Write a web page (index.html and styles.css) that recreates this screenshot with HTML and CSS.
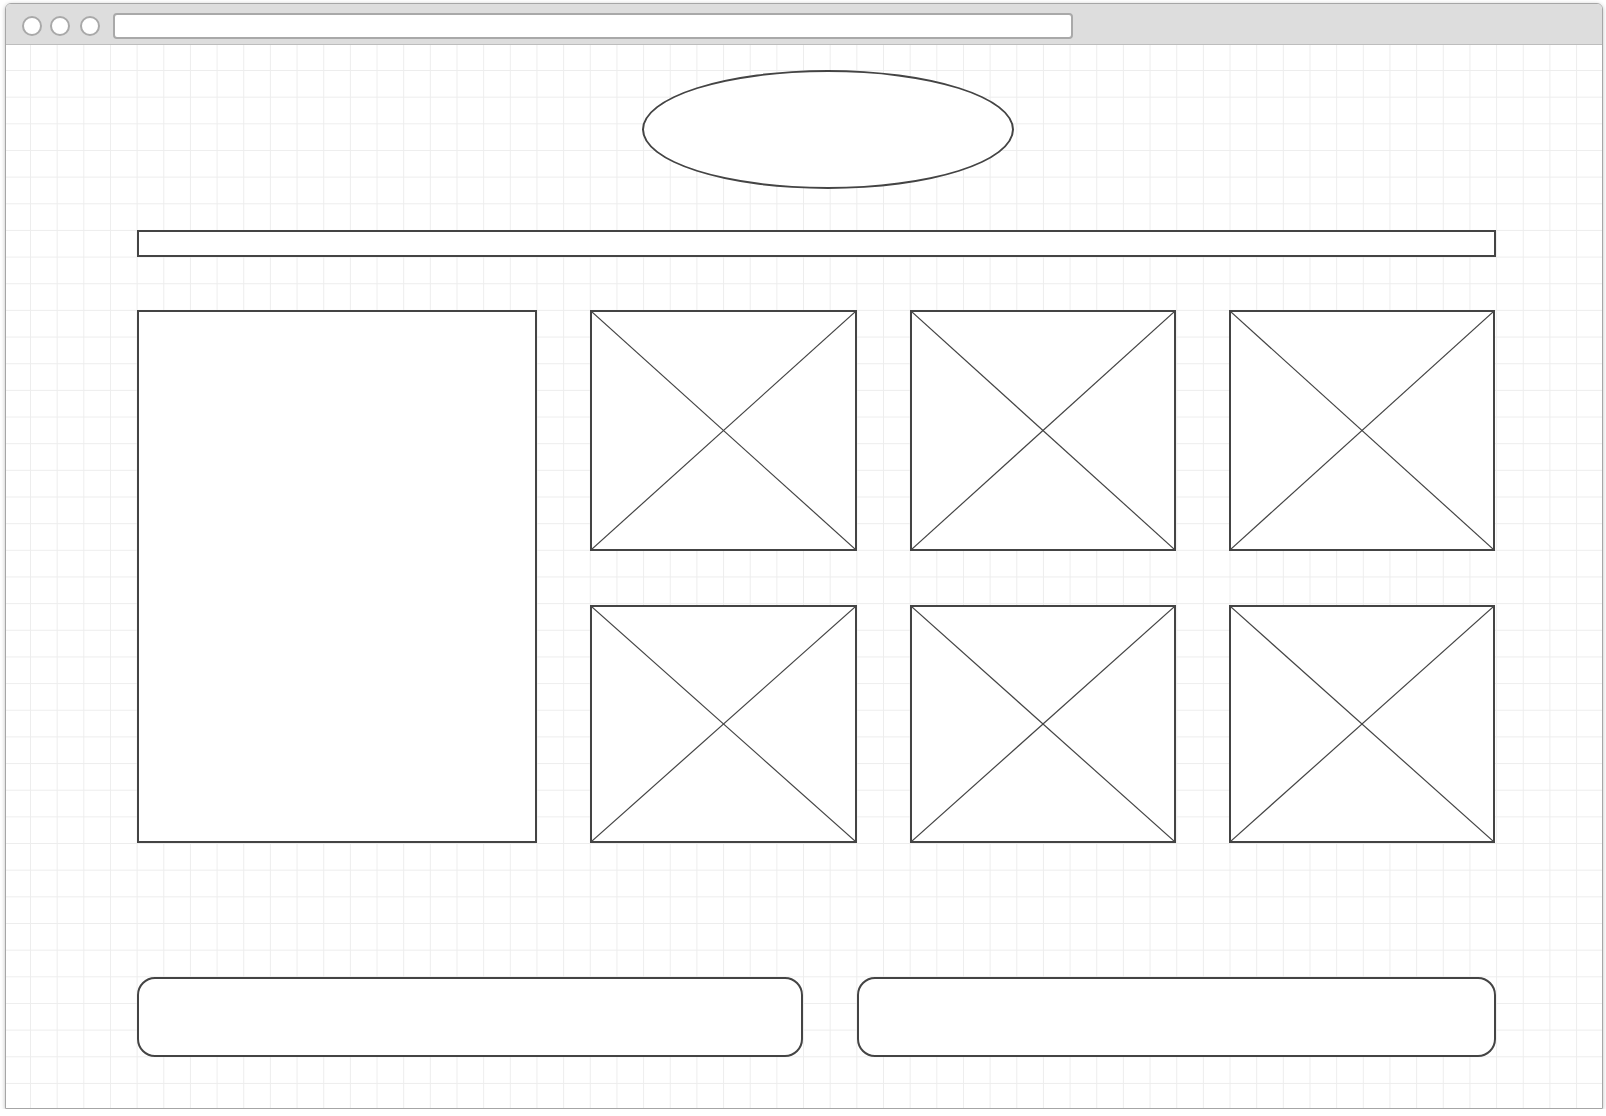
FILE: index.html
```html
<!DOCTYPE html>
<html lang="en">
<head>
  <meta charset="UTF-8">
  <title>Wireframe</title>
  <link rel="stylesheet" href="styles.css">
</head>
<body>
  <!-- Browser window -->
  <div class="window">
    <div class="chrome">
      <span class="dot"></span>
      <span class="dot"></span>
      <span class="dot"></span>
      <div class="address"></div>
    </div>

    <!-- Canvas with grid -->
    <div class="canvas">
      <div class="page">
        <div class="logo"></div>
        <div class="searchbar"></div>

        <div class="main">
          <div class="sidebar"></div>
          <div class="gallery">
            <div class="thumb"><svg viewBox="0 0 100 100" preserveAspectRatio="none"><line x1="0" y1="0" x2="100" y2="100"/><line x1="100" y1="0" x2="0" y2="100"/></svg></div>
            <div class="thumb"><svg viewBox="0 0 100 100" preserveAspectRatio="none"><line x1="0" y1="0" x2="100" y2="100"/><line x1="100" y1="0" x2="0" y2="100"/></svg></div>
            <div class="thumb"><svg viewBox="0 0 100 100" preserveAspectRatio="none"><line x1="0" y1="0" x2="100" y2="100"/><line x1="100" y1="0" x2="0" y2="100"/></svg></div>
            <div class="thumb"><svg viewBox="0 0 100 100" preserveAspectRatio="none"><line x1="0" y1="0" x2="100" y2="100"/><line x1="100" y1="0" x2="0" y2="100"/></svg></div>
            <div class="thumb"><svg viewBox="0 0 100 100" preserveAspectRatio="none"><line x1="0" y1="0" x2="100" y2="100"/><line x1="100" y1="0" x2="0" y2="100"/></svg></div>
            <div class="thumb"><svg viewBox="0 0 100 100" preserveAspectRatio="none"><line x1="0" y1="0" x2="100" y2="100"/><line x1="100" y1="0" x2="0" y2="100"/></svg></div>
          </div>
        </div>

        <div class="footer">
          <div class="button wide"></div>
          <div class="button"></div>
        </div>
      </div>
    </div>
  </div>
</body>
</html>
```

FILE: styles.css
```css
/* Global */
body {
  margin: 0;
  padding: 0;
  background-color: #fff;
  font-family: "Liberation Sans", Arial, sans-serif;
}

/* Browser window */
.window {
  box-sizing: border-box;
  width: 1598px;
  height: 1106px;
  margin: 3px 0 0 5px;
  border: 1px solid #a6a6a6;
  border-radius: 6px 6px 0 0;
  box-shadow: 0 1px 4px rgba(0,0,0,0.25);
  display: flex;
  flex-direction: column;
  overflow: hidden;
}
.chrome {
  height: 41px;
  padding: 4px 0 0 16px;
  box-sizing: border-box;
  background-color: #dddddd;
  border-bottom: 1px solid #bdbdbd;
  display: flex;
  align-items: center;
  flex-shrink: 0;
}
.chrome .dot {
  width: 20px;
  height: 20px;
  box-sizing: border-box;
  border: 2px solid #a9a9a9;
  border-radius: 50%;
  background-color: #fff;
  margin-right: 8px;
}
.chrome .dot:nth-child(2) {
  margin-right: 10px;
}
.chrome .dot:nth-child(3) {
  margin-right: 13px;
}
.address {
  width: 960px;
  height: 26px;
  box-sizing: border-box;
  border: 2px solid #a9a9a9;
  border-radius: 4px;
  background-color: #fff;
}

/* Canvas */
.canvas {
  flex: 1;
  background-color: #fff;
  background-image:
    linear-gradient(to right, #ededed 1px, transparent 1px),
    linear-gradient(to bottom, #ededed 1px, transparent 1px);
  background-size: 26.667px 26.667px;
  background-position: 24px 25px;
}
.page {
  width: 1359px;
  padding: 25px 0 0 131px;
}

/* Shapes */
.logo {
  width: 372px;
  height: 119px;
  margin-left: 505px;
  box-sizing: border-box;
  border: 2px solid #444;
  border-radius: 50%;
  background-color: #fff;
}
.searchbar {
  height: 27px;
  margin-top: 41px;
  box-sizing: border-box;
  border: 2px solid #444;
  background-color: #fff;
}
.main {
  display: flex;
  gap: 53px;
  margin-top: 53px;
}
.sidebar {
  width: 400px;
  height: 533px;
  box-sizing: border-box;
  border: 2px solid #444;
  background-color: #fff;
  flex-shrink: 0;
}
.gallery {
  flex: 1;
  display: grid;
  grid-template-columns: 267px 266px 266px;
  grid-template-rows: 241px 238px;
  column-gap: 53px;
  row-gap: 54px;
}
.thumb {
  box-sizing: border-box;
  border: 2px solid #444;
  background-color: #fff;
}
.thumb svg {
  display: block;
  width: 100%;
  height: 100%;
}
.thumb line {
  stroke: #444;
  stroke-width: 1.2;
  vector-effect: non-scaling-stroke;
}

/* Bottom buttons */
.footer {
  display: flex;
  gap: 54px;
  margin-top: 134px;
}
.button {
  flex: 1;
  height: 80px;
  box-sizing: border-box;
  border: 2px solid #444;
  border-radius: 18px;
  background-color: #fff;
}
.button.wide {
  flex: 0 0 666px;
}
```
